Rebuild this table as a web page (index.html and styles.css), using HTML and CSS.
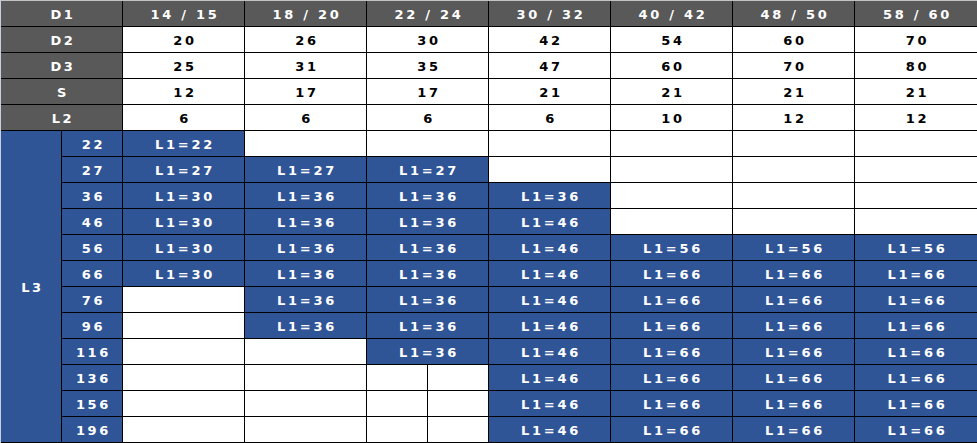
FILE: index.html
```html
<!DOCTYPE html>
<html>
<head>
<meta charset="utf-8">
<link rel="stylesheet" href="styles.css">
</head>
<body>
<div class="grid">
  <div class="c h lab">D1</div>
  <div class="c h">14 / 15</div><div class="c h">18 / 20</div><div class="c h">22 / 24</div><div class="c h">30 / 32</div><div class="c h">40 / 42</div><div class="c h">48 / 50</div><div class="c h e">58 / 60</div>

  <div class="c h lab">D2</div>
  <div class="c w">20</div><div class="c w">26</div><div class="c w">30</div><div class="c w">42</div><div class="c w">54</div><div class="c w">60</div><div class="c w e">70</div>

  <div class="c h lab">D3</div>
  <div class="c w">25</div><div class="c w">31</div><div class="c w">35</div><div class="c w">47</div><div class="c w">60</div><div class="c w">70</div><div class="c w e">80</div>

  <div class="c h lab">S</div>
  <div class="c w">12</div><div class="c w">17</div><div class="c w">17</div><div class="c w">21</div><div class="c w">21</div><div class="c w">21</div><div class="c w e">21</div>

  <div class="c h lab">L2</div>
  <div class="c w">6</div><div class="c w">6</div><div class="c w">6</div><div class="c w">6</div><div class="c w">10</div><div class="c w">12</div><div class="c w e">12</div>

  <div class="c b l3">L3</div>

  <div class="c b">22</div>
  <div class="c b">L1=22</div><div class="c w"></div><div class="c w"></div><div class="c w"></div><div class="c w"></div><div class="c w"></div><div class="c w e"></div>

  <div class="c b">27</div>
  <div class="c b">L1=27</div><div class="c b">L1=27</div><div class="c b">L1=27</div><div class="c w"></div><div class="c w"></div><div class="c w"></div><div class="c w e"></div>

  <div class="c b">36</div>
  <div class="c b">L1=30</div><div class="c b">L1=36</div><div class="c b">L1=36</div><div class="c b">L1=36</div><div class="c w"></div><div class="c w"></div><div class="c w e"></div>

  <div class="c b">46</div>
  <div class="c b">L1=30</div><div class="c b">L1=36</div><div class="c b">L1=36</div><div class="c b">L1=46</div><div class="c w"></div><div class="c w"></div><div class="c w e"></div>

  <div class="c b">56</div>
  <div class="c b">L1=30</div><div class="c b">L1=36</div><div class="c b">L1=36</div><div class="c b">L1=46</div><div class="c b">L1=56</div><div class="c b">L1=56</div><div class="c b e">L1=56</div>

  <div class="c b">66</div>
  <div class="c b">L1=30</div><div class="c b">L1=36</div><div class="c b">L1=36</div><div class="c b">L1=46</div><div class="c b">L1=66</div><div class="c b">L1=66</div><div class="c b e">L1=66</div>

  <div class="c b">76</div>
  <div class="c w"></div><div class="c b">L1=36</div><div class="c b">L1=36</div><div class="c b">L1=46</div><div class="c b">L1=66</div><div class="c b">L1=66</div><div class="c b e">L1=66</div>

  <div class="c b">96</div>
  <div class="c w"></div><div class="c b">L1=36</div><div class="c b">L1=36</div><div class="c b">L1=46</div><div class="c b">L1=66</div><div class="c b">L1=66</div><div class="c b e">L1=66</div>

  <div class="c b">116</div>
  <div class="c w"></div><div class="c w"></div><div class="c b">L1=36</div><div class="c b">L1=46</div><div class="c b">L1=66</div><div class="c b">L1=66</div><div class="c b e">L1=66</div>

  <div class="c b">136</div>
  <div class="c w"></div><div class="c w"></div><div class="c w split"><span class="half"></span><span class="half2"></span></div><div class="c b">L1=46</div><div class="c b">L1=66</div><div class="c b">L1=66</div><div class="c b e">L1=66</div>

  <div class="c b">156</div>
  <div class="c w"></div><div class="c w"></div><div class="c w split"><span class="half"></span><span class="half2"></span></div><div class="c b">L1=46</div><div class="c b">L1=66</div><div class="c b">L1=66</div><div class="c b e">L1=66</div>

  <div class="c b">196</div>
  <div class="c w"></div><div class="c w"></div><div class="c w split"><span class="half"></span><span class="half2"></span></div><div class="c b">L1=46</div><div class="c b">L1=66</div><div class="c b">L1=66</div><div class="c b e">L1=66</div>
</div>
</body>
</html>
```
FILE: styles.css
```css
* { box-sizing: border-box; }
html, body { margin: 0; padding: 0; background: #ffffff; }
.grid {
  display: grid;
  width: 977px;
  grid-template-columns: 61px 61px repeat(7, 122px);
  grid-auto-rows: 26px;
  border-top: 1px solid #c4c4c4;
  border-left: 1px solid #c9d0dc;
  font-family: "DejaVu Sans", sans-serif;
  font-weight: bold;
  font-size: 13px;
  letter-spacing: 2.7px;
}
.c {
  border-right: 1px solid #000;
  border-bottom: 1px solid #000;
  display: flex;
  align-items: center;
  justify-content: center;
  padding-left: 3px;
  padding-top: 1px;
  white-space: nowrap;
}
.e { border-right: none; }
.h { background: #595959; color: #ffffff; }
.w { background: #ffffff; color: #000000; }
.b { background: #2f5597; color: #ffffff; }
.lab { grid-column: span 2; }
.l3 { grid-row: span 12; }
.split { padding: 0; justify-content: flex-start; align-items: stretch; }
.half { width: 61px; border-right: 1px solid #000; }
.half2 { flex: 1; }
```
